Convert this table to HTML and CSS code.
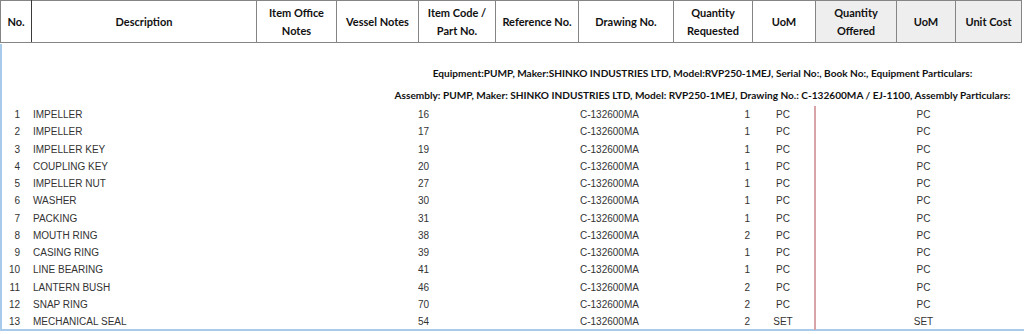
FILE: index.html
```html
<!DOCTYPE html>
<html>
<head>
<meta charset="utf-8">
<link rel="stylesheet" href="styles.css">
</head>
<body>
<table class="head">
  <colgroup>
    <col class="c1"><col class="c2"><col class="c3"><col class="c4"><col class="c5"><col class="c6"><col class="c7"><col class="c8"><col class="c9"><col class="c10"><col class="c11"><col class="c12">
  </colgroup>
  <tr>
    <th class="first">No.</th>
    <th>Description</th>
    <th>Item Office<br>Notes</th>
    <th>Vessel Notes</th>
    <th>Item Code /<br>Part No.</th>
    <th>Reference No.</th>
    <th>Drawing No.</th>
    <th>Quantity<br>Requested</th>
    <th>UoM</th>
    <th class="grey">Quantity<br>Offered</th>
    <th class="grey">UoM</th>
    <th class="grey">Unit Cost</th>
  </tr>
</table>
<div class="panel">
  <table class="body">
    <colgroup>
      <col class="c1 b1"><col class="c2"><col class="c3"><col class="c4"><col class="c5"><col class="c6"><col class="c7"><col class="c8"><col class="c9"><col class="c10"><col class="c11"><col class="c12">
    </colgroup>
    <tr class="info first-info"><td colspan="12">Equipment:PUMP, Maker:SHINKO INDUSTRIES LTD, Model:RVP250-1MEJ, Serial No:, Book No:, Equipment Particulars:</td></tr>
    <tr class="info second-info"><td colspan="12">Assembly: PUMP, Maker: SHINKO INDUSTRIES LTD, Model: RVP250-1MEJ, Drawing No.: C-132600MA / EJ-1100, Assembly Particulars:</td></tr>
    <tr class="row"><td class="no">1</td><td class="desc">IMPELLER</td><td></td><td></td><td class="code">16</td><td></td><td class="draw">C-132600MA</td><td class="qty">1</td><td class="uom">PC</td><td></td><td class="uom2">PC</td><td></td></tr>
    <tr class="row"><td class="no">2</td><td class="desc">IMPELLER</td><td></td><td></td><td class="code">17</td><td></td><td class="draw">C-132600MA</td><td class="qty">1</td><td class="uom">PC</td><td></td><td class="uom2">PC</td><td></td></tr>
    <tr class="row"><td class="no">3</td><td class="desc">IMPELLER KEY</td><td></td><td></td><td class="code">19</td><td></td><td class="draw">C-132600MA</td><td class="qty">1</td><td class="uom">PC</td><td></td><td class="uom2">PC</td><td></td></tr>
    <tr class="row"><td class="no">4</td><td class="desc">COUPLING KEY</td><td></td><td></td><td class="code">20</td><td></td><td class="draw">C-132600MA</td><td class="qty">1</td><td class="uom">PC</td><td></td><td class="uom2">PC</td><td></td></tr>
    <tr class="row"><td class="no">5</td><td class="desc">IMPELLER NUT</td><td></td><td></td><td class="code">27</td><td></td><td class="draw">C-132600MA</td><td class="qty">1</td><td class="uom">PC</td><td></td><td class="uom2">PC</td><td></td></tr>
    <tr class="row"><td class="no">6</td><td class="desc">WASHER</td><td></td><td></td><td class="code">30</td><td></td><td class="draw">C-132600MA</td><td class="qty">1</td><td class="uom">PC</td><td></td><td class="uom2">PC</td><td></td></tr>
    <tr class="row"><td class="no">7</td><td class="desc">PACKING</td><td></td><td></td><td class="code">31</td><td></td><td class="draw">C-132600MA</td><td class="qty">1</td><td class="uom">PC</td><td></td><td class="uom2">PC</td><td></td></tr>
    <tr class="row"><td class="no">8</td><td class="desc">MOUTH RING</td><td></td><td></td><td class="code">38</td><td></td><td class="draw">C-132600MA</td><td class="qty">2</td><td class="uom">PC</td><td></td><td class="uom2">PC</td><td></td></tr>
    <tr class="row"><td class="no">9</td><td class="desc">CASING RING</td><td></td><td></td><td class="code">39</td><td></td><td class="draw">C-132600MA</td><td class="qty">1</td><td class="uom">PC</td><td></td><td class="uom2">PC</td><td></td></tr>
    <tr class="row"><td class="no">10</td><td class="desc">LINE BEARING</td><td></td><td></td><td class="code">41</td><td></td><td class="draw">C-132600MA</td><td class="qty">1</td><td class="uom">PC</td><td></td><td class="uom2">PC</td><td></td></tr>
    <tr class="row"><td class="no">11</td><td class="desc">LANTERN BUSH</td><td></td><td></td><td class="code">46</td><td></td><td class="draw">C-132600MA</td><td class="qty">2</td><td class="uom">PC</td><td></td><td class="uom2">PC</td><td></td></tr>
    <tr class="row"><td class="no">12</td><td class="desc">SNAP RING</td><td></td><td></td><td class="code">70</td><td></td><td class="draw">C-132600MA</td><td class="qty">2</td><td class="uom">PC</td><td></td><td class="uom2">PC</td><td></td></tr>
    <tr class="row"><td class="no">13</td><td class="desc">MECHANICAL SEAL</td><td></td><td></td><td class="code">54</td><td></td><td class="draw">C-132600MA</td><td class="qty">2</td><td class="uom">SET</td><td></td><td class="uom2">SET</td><td></td></tr>
  </table>
</div>
</body>
</html>
```
FILE: styles.css
```css
html, body {
  margin: 0;
  padding: 0;
  background: #ffffff;
}
body {
  width: 1024px;
  height: 334px;
  overflow: hidden;
}
table {
  border-collapse: collapse;
  table-layout: fixed;
  width: 1021px;
}
.c1 { width: 31px; }
.c2 { width: 225px; }
.c3 { width: 80px; }
.c4 { width: 82px; }
.c5 { width: 77px; }
.c6 { width: 83px; }
.c7 { width: 95px; }
.c8 { width: 79px; }
.c9 { width: 63px; }
.c10 { width: 81px; }
.c11 { width: 59px; }
.c12 { width: 66px; }
.body .b1 { width: 29px; }

.head th {
  height: 41px;
  padding: 0;
  border: 1px solid #858585;
  font-family: Lato, "Liberation Sans", sans-serif;
  font-weight: 700;
  font-size: 11px;
  line-height: 18px;
  color: #111111;
  text-align: center;
  vertical-align: middle;
  background: #ffffff;
}
.head th.first {
  border-right-color: #3a3a3a;
}
.head th.grey {
  background: #eeeeee;
}

.panel {
  width: 1024px;
  height: 287px;
  margin-top: 1px;
  border-left: 2px solid #a9cbeb;
  border-bottom: 2px solid #a9cbeb;
  box-sizing: border-box;
}
.body {
  width: 1019px;
}
.body td {
  padding: 0;
  white-space: nowrap;
  overflow: hidden;
}
.info td {
  height: 21px;
  line-height: 21px;
  font-family: Lato, "Liberation Sans", sans-serif;
  font-weight: 700;
  font-size: 10.1px;
  color: #111111;
  text-align: center;
  padding-left: 382px;
}
.first-info td {
  padding-top: 19px;
}
.second-info td {
  line-height: 22px;
  height: 21px;
}
.row td {
  height: 17.25px;
  font-family: "Liberation Sans", Arial, sans-serif;
  font-size: 10px;
  color: #333333;
  line-height: 17px;
}
.row td.no {
  text-align: right;
  padding-right: 11px;
}
.row td.desc { padding-left: 2px; }
.row td.code { padding-left: 0; }
.row td.draw { padding-left: 2px; }
.row td.qty {
  text-align: right;
  padding-right: 2px;
}
.row td.uom {
  text-align: center;
  border-right: 2px solid #d7a4a8;
}
.row td.uom2 {
  text-align: center;
  padding-right: 4px;
}
```
